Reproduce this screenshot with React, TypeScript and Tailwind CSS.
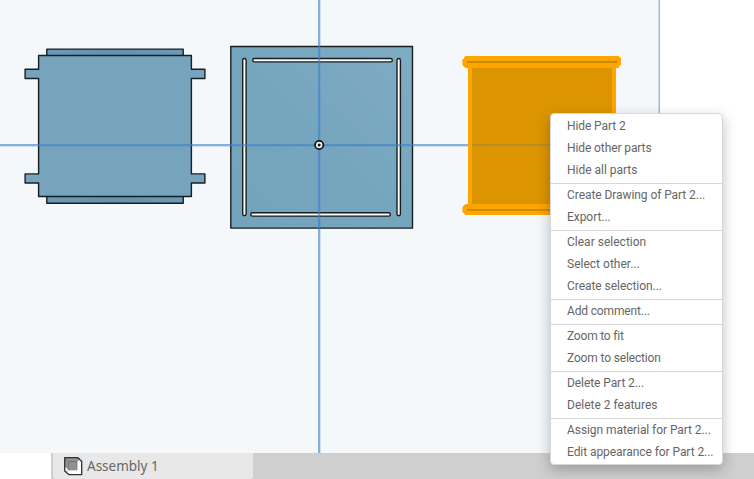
const menuGroups: { label: string; spacing: string }[][] = [
  [
    { label: 'Hide Part 2', spacing: 'tracking-[-0.1px]' },
    { label: 'Hide other parts', spacing: 'tracking-[-0.1px]' },
    { label: 'Hide all parts', spacing: 'tracking-[-0.02px]' },
  ],
  [
    { label: 'Create Drawing of Part 2...', spacing: 'tracking-[-0.07px]' },
    { label: 'Export...', spacing: 'tracking-[-0.05px]' },
  ],
  [
    { label: 'Clear selection', spacing: 'tracking-[0.01px]' },
    { label: 'Select other...', spacing: 'tracking-[0.01px]' },
    { label: 'Create selection...', spacing: 'tracking-[-0.05px]' },
  ],
  [{ label: 'Add comment...', spacing: 'tracking-[-0.15px]' }],
  [
    { label: 'Zoom to fit', spacing: 'tracking-[-0.2px]' },
    { label: 'Zoom to selection', spacing: 'tracking-[-0.15px]' },
  ],
  [
    { label: 'Delete Part 2...', spacing: 'tracking-[-0.08px]' },
    { label: 'Delete 2 features', spacing: 'tracking-[0px]' },
  ],
  [
    { label: 'Assign material for Part 2...', spacing: 'tracking-[-0.07px]' },
    { label: 'Edit appearance for Part 2...', spacing: 'tracking-[-0.07px]' },
  ],
];

function Viewport() {
  return (
    <svg className="block shrink-0" width="754" height="453" viewBox="0 0 754 453">
      <defs>
        <linearGradient id="plate" x1="0" y1="1" x2="1" y2="0">
          <stop offset="0" stopColor="#74a3bc" />
          <stop offset="0.5" stopColor="#76a5be" />
          <stop offset="1" stopColor="#7dacc3" />
        </linearGradient>
        <linearGradient id="edge" x1="0" y1="0" x2="1" y2="0">
          <stop offset="0" stopColor="#6a9ab6" />
          <stop offset="0.5" stopColor="#6493b0" />
          <stop offset="1" stopColor="#6a9ab6" />
        </linearGradient>
      </defs>
      <rect width="754" height="453" fill="#ffffff" />
      <rect width="659" height="453" fill="#f4f8fb" />
      <rect x="658" width="1" height="453" fill="#c9d9ea" />
      <rect x="659" width="1" height="453" fill="#9dbbdb" />

      <g stroke="#171e22" strokeWidth="1.4" strokeLinejoin="round">
        <rect x="46.8" y="49.1" width="136.4" height="7" fill="url(#edge)" />
        <rect x="46.8" y="196" width="136.4" height="7.2" fill="url(#edge)" />
        <path
          d="M38.6 55.5H191.4V69.3H204.9V78.5H191.4V173.9H204.9V183H191.4V196.5H38.6V183H25.1V173.9H38.6V78.5H25.1V69.3H38.6Z"
          fill="#75a4bc"
        />
        <rect x="230.8" y="46.5" width="181.7" height="181.6" fill="url(#plate)" />
        <g fill="#f8fafc">
          <rect x="242.7" y="58.5" width="3.4" height="157.3" rx="1.7" />
          <rect x="397" y="58.5" width="3.4" height="157.3" rx="1.7" />
          <rect x="252.7" y="58.5" width="139.6" height="3.4" rx="1.7" />
          <rect x="250.8" y="212.7" width="139.6" height="3.4" rx="1.7" />
        </g>
      </g>

      <path
        d="M465 56H619V57H620V58H621V65H620V66H619V68H616V204H619V206H621V213H619V215H465V214H464V213H463V206H464V205H465V204H468V68H465V67H464V66H463V59H464V57H465Z"
        fill="#ffa500"
      />
      <rect x="462" y="59" width="1" height="6" fill="#ffc55c" />
      <rect x="462" y="207" width="1" height="5" fill="#ffc55c" />
      <rect x="472" y="68" width="140" height="136" fill="#dc9500" />
      <rect x="467" y="61" width="150" height="2" fill="#cd8b00" />
      <rect x="467" y="209" width="150" height="2" fill="#cd8b00" />

      <g fill="#3f7fc4">
        <rect y="144" width="468" height="2" opacity="0.6" />
        <rect y="146" width="468" height="1" opacity="0.2" />
        <rect x="472" y="144" width="140" height="2" opacity="0.24" />
        <rect x="616" y="144" width="43" height="2" opacity="0.6" />
        <rect x="318" width="2" height="453" opacity="0.6" />
        <rect x="320" width="1" height="453" opacity="0.2" />
      </g>
      <circle cx="319.2" cy="145" r="4.1" fill="#f6f5ee" stroke="#141a1d" strokeWidth="1.8" />
      <circle cx="319.2" cy="145" r="1.5" fill="#141a1d" />
    </svg>
  );
}

function AssemblyIcon() {
  return (
    <svg className="shrink-0" width="19" height="19" viewBox="0 0 19 19">
      <path d="M0.7 0.7H14L17.7 4.5V17.7H5L0.7 14Z" fill="#ffffff" />
      <path d="M1 1H16L13 4.6V12.8H4.6L1 10Z" fill="#929292" />
      <path d="M1.2 1.2L4.6 4.6H13V12.8H4.6V4.6M13 4.6L15.5 2M4.6 12.8L2.2 15" fill="none" stroke="#686868" strokeWidth="0.7" />
      <path d="M0.7 0.7H14L17.7 4.5V17.7H5L0.7 14Z" fill="none" stroke="#303030" strokeWidth="1.3" strokeLinejoin="round" />
    </svg>
  );
}

function ContextMenu() {
  return (
    <div className="absolute left-[550px] top-[113px] w-[173px] rounded-[4px] border border-[#d5d7d8] bg-white py-px shadow-[0_5px_14px_rgba(0,0,0,0.25)]">
      {menuGroups.map((group) => (
        <div key={group[0].label} className="border-b border-[#d9d9d9] pb-0.5 last:border-b-0 last:pb-0">
          {group.map((item) => (
            <div
              key={item.label}
              className={`h-[22px] whitespace-nowrap pl-4 font-[Roboto,sans-serif] text-[12px] leading-[22px] text-[#666666] ${item.spacing}`}
            >
              {item.label}
            </div>
          ))}
        </div>
      ))}
    </div>
  );
}

export default function App() {
  return (
    <div className="relative flex h-[479px] w-[754px] flex-col overflow-hidden bg-white">
      <Viewport />
      <div className="flex h-[26px]">
        <div className="w-[51px] bg-white" />
        <div className="flex flex-1 bg-[#cfcfcf] pl-0.5">
          <div className="flex w-[200px] items-center gap-1 rounded-b-[3px] bg-[#e8e8e8] pl-[11px]">
            <AssemblyIcon />
            <span className="font-['Noto_Sans',sans-serif] text-[13.5px] leading-[26px] text-[#666666]">Assembly 1</span>
          </div>
        </div>
      </div>
      <ContextMenu />
    </div>
  );
}
